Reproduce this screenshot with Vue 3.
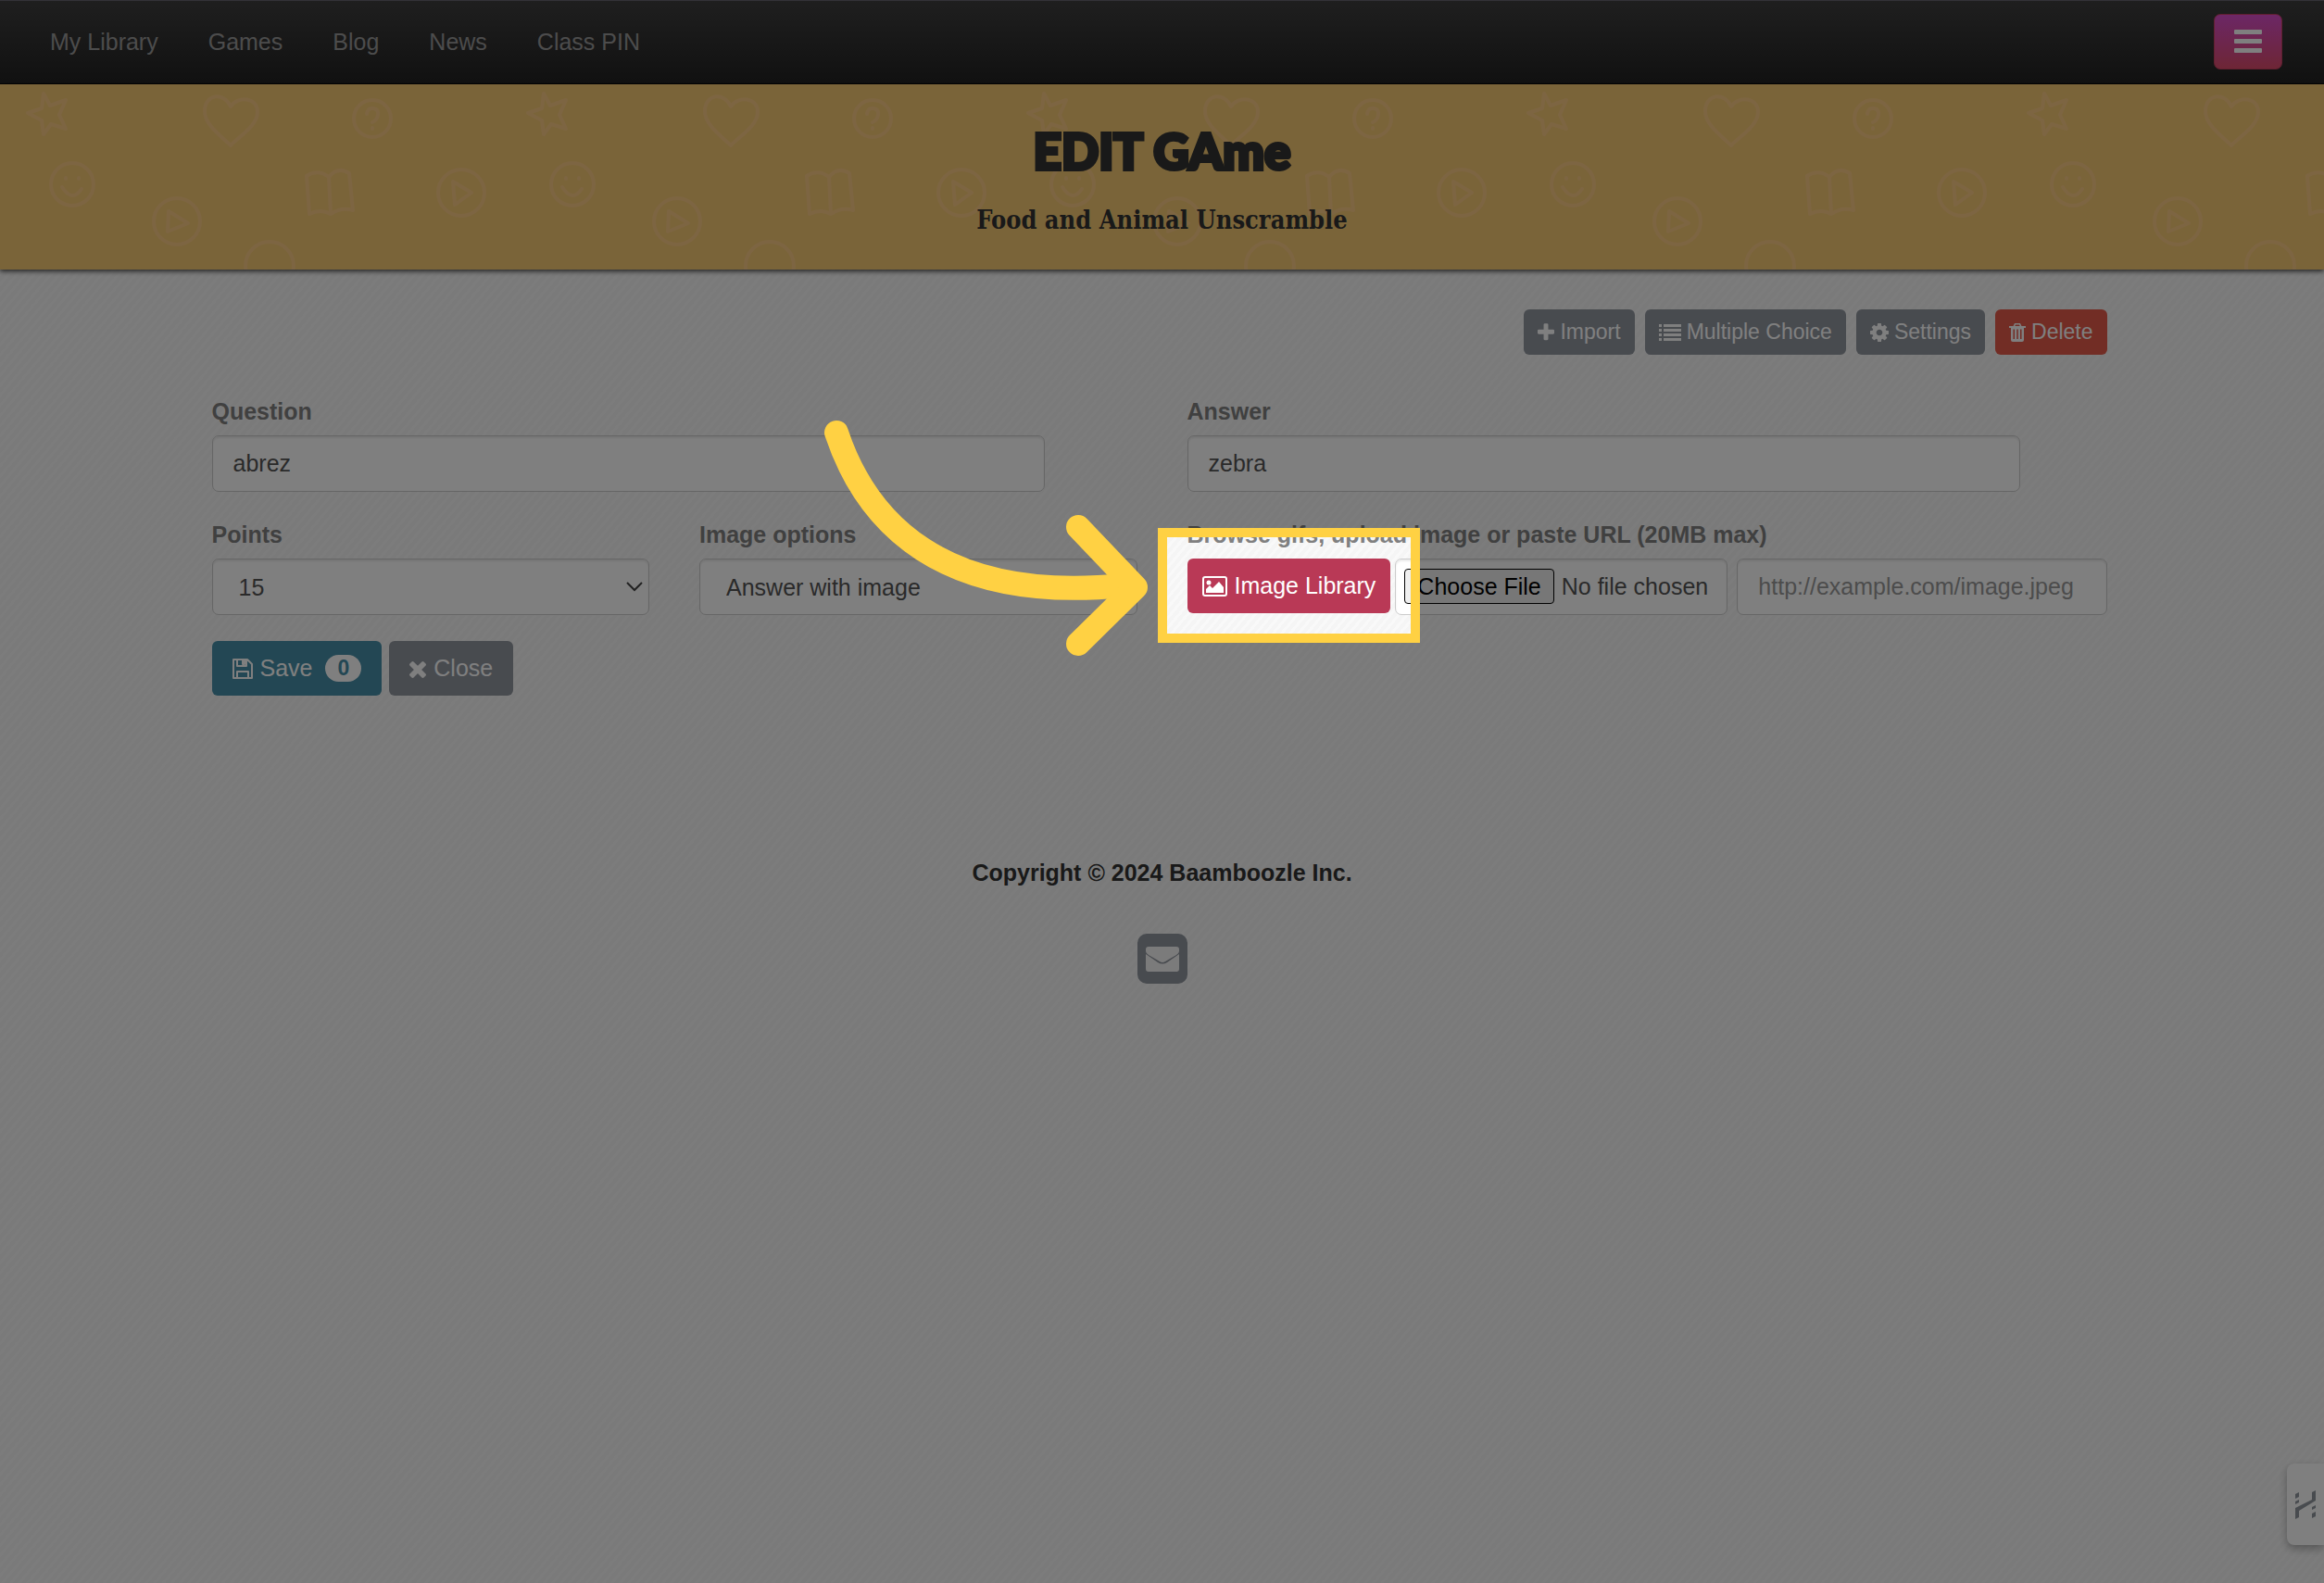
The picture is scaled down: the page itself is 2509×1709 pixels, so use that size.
<script setup>
import { ref, reactive } from 'vue'

const links = ['My Library', 'Games', 'Blog', 'News', 'Class PIN']

const form = reactive({
  question: 'abrez',
  answer: 'zebra',
  points: '15',
  imageOption: 'Answer with image',
  imageUrl: ''
})
const savedCount = ref(0)

const pointOptions = ['5', '10', '15', '20', '25']
const imageOptions = ['No image', 'Question with image', 'Answer with image']

function save() {
  savedCount.value++
}
</script>

<template>
  <div class="page">
    <header class="navbar">
      <nav class="nav-links">
        <a v-for="link in links" :key="link" href="#">{{ link }}</a>
      </nav>
      <button class="menu-btn" type="button" aria-label="Menu">
        <svg viewBox="0 0 30 25" width="30" height="25" fill="#fff">
          <rect y="0" width="30" height="5" rx="1" />
          <rect y="10" width="30" height="5" rx="1" />
          <rect y="20" width="30" height="5" rx="1" />
        </svg>
      </button>
    </header>

    <section class="banner">
      <!-- doodle pattern -->
      <svg class="doodles" width="100%" height="100%" aria-hidden="true">
        <defs>
          <pattern id="doodle" width="540" height="400" patternUnits="userSpaceOnUse">
            <g fill="none" stroke="#fbcb84" stroke-width="4" stroke-linecap="round" stroke-linejoin="round">
              <path d="M47 10L54 23L71 17L64 33L71 48L55 43L47 54L45 39L30 31L45 26Z" />
              <path d="M249 66C236 54 221 43 221 29C221 10 242 8 249 24C257 12 278 14 278 30C278 44 260 55 249 66Z" />
              <circle cx="402" cy="37" r="20" />
              <path d="M396 32q1-7 7-6t5 7-6 8m0 6v1" />
              <circle cx="78" cy="108" r="23" />
              <path d="M71 101v1M85 101v1M67 111q11 17 21 2" />
              <circle cx="191" cy="148" r="25" />
              <path d="M182 137L203 150L181 159Z" />
              <path d="M355 100q-12-9-24-1l3 41q12-6 23 0 12-8 24-4l-4-40q-12-8-22 4zl2 40" />
              <circle cx="498" cy="117" r="25" />
              <path d="M489 105L509 117L491 130Z" />
              <circle cx="291" cy="196" r="26" />
            </g>
          </pattern>
        </defs>
        <rect width="100%" height="100%" fill="url(#doodle)" />
      </svg>
      <h1>EDIT GAme</h1>
      <h2>Food and Animal Unscramble</h2>
    </section>

    <main class="container">
      <div class="toolbar">
        <button class="btn btn-sm" type="button">
          <svg class="icon" viewBox="192 128 1408 1536" width="18" height="20"><path d="M1600 736v192q0 40-28 68t-68 28h-416v416q0 40-28 68t-68 28h-192q-40 0-68-28t-28-68v-416h-416q-40 0-68-28t-28-68v-192q0-40 28-68t68-28h416v-416q0-40 28-68t68-28h192q40 0 68 28t28 68v416h416q40 0 68 28t28 68z" /></svg>
          Import
        </button>
        <button class="btn btn-sm" type="button">
          <svg class="icon" viewBox="0 0 24 18" width="24" height="18">
            <path d="M0 0h3v3H0zM5 0h19v3H5zM0 5h3v3H0zM5 5h19v3H5zM0 10h3v3H0zM5 10h19v3H5zM0 15h3v3H0zM5 15h19v3H5z" />
          </svg>
          Multiple Choice
        </button>
        <button class="btn btn-sm" type="button">
          <svg class="icon" viewBox="128 128 1536 1536" width="20" height="20"><path d="M1152 896q0-106-75-181t-181-75-181 75-75 181 75 181 181 75 181-75 75-181zm512-109v222q0 12-8 23t-20 13l-185 28q-19 54-39 91 35 50 107 138 10 12 10 25t-9 23q-27 37-99 108t-94 71q-12 0-26-9l-138-108q-44 23-91 38-16 136-29 186-7 28-36 28h-222q-14 0-24.5-8.5t-11.5-21.5l-28-184q-49-16-90-37l-141 107q-10 9-25 9-14 0-25-11-126-114-165-168-7-10-7-23 0-12 8-23 15-21 51-66.5t54-70.5q-27-50-41-99l-183-27q-13-2-21-12.5t-8-23.5v-222q0-12 8-23t19-13l186-28q14-46 39-92-40-57-107-138-10-12-10-24 0-10 9-23 26-36 98.5-107.5t94.5-71.5q13 0 26 10l138 107q44-23 91-38 16-136 29-186 7-28 36-28h222q14 0 24.5 8.5t11.5 21.5l28 184q49 16 90 37l142-107q9-9 24-9 13 0 25 10 129 119 165 170 7 8 7 22 0 12-8 23-15 21-51 66.5t-54 70.5q26 50 41 98l183 28q13 2 21 12.5t8 23.5z" /></svg>
          Settings
        </button>
        <button class="btn btn-sm btn-danger" type="button">
          <svg class="icon" viewBox="0 0 18 20" width="18" height="20">
            <path fill-rule="evenodd" d="M6 0h6l1.500 3H18v2h-2v13q0 2-2 2H4q-2 0-2-2V5H0V3h4.500zM7 1.500L6.300 3h5.400L11 1.500zM4.500 6.500v10.500h1.500V6.500zM8.300 6.500v10.500h1.500V6.500zM12 6.500v10.500h1.500V6.500z" />
          </svg>
          Delete
        </button>
      </div>

      <form class="game-form" @submit.prevent="save">
        <div class="field half">
          <label for="question">Question</label>
          <input id="question" v-model="form.question" class="control" type="text">
        </div>
        <div class="field half">
          <label for="answer">Answer</label>
          <input id="answer" v-model="form.answer" class="control" type="text">
        </div>

        <div class="field">
          <label for="points">Points</label>
          <div class="select-wrap">
            <select id="points" v-model="form.points" class="control">
              <option v-for="p in pointOptions" :key="p">{{ p }}</option>
            </select>
            <svg class="chevron" viewBox="0 0 18 11" width="18" height="11"><path d="M1 1l8 8 8-8" /></svg>
          </div>
        </div>
        <div class="field">
          <label for="image-option">Image options</label>
          <div class="select-wrap">
            <select id="image-option" v-model="form.imageOption" class="control">
              <option v-for="o in imageOptions" :key="o">{{ o }}</option>
            </select>
            <svg class="chevron" viewBox="0 0 18 11" width="18" height="11"><path d="M1 1l8 8 8-8" /></svg>
          </div>
        </div>
        <div class="field wide">
          <label for="image-url">Browse gifs, upload image or paste URL (20MB max)</label>
          <div class="image-row">
            <div class="library">
              <button class="btn btn-library" type="button">
                <svg class="icon" viewBox="0 0 27 22" width="27" height="22">
                  <rect x="1" y="1" width="25" height="20" rx="2" fill="none" stroke="currentColor" stroke-width="2" />
                  <circle cx="7" cy="7" r="2.500" />
                  <path d="M4 18v-4l4-4 3 3 7-7 5 6v6z" />
                </svg>
                Image Library
              </button>
              <!-- tutorial spotlight, dims everything outside the frame -->
              <div class="spotlight"></div>
              <svg class="arrow" viewBox="0 0 352 168" width="352" height="168" aria-hidden="true">
                <path d="M16 19C48 115 129 204 326 184" />
                <path d="M277 121L339 186L277 247" />
              </svg>
            </div>
            <input class="control file" type="file" aria-label="Upload image">
            <input id="image-url" v-model="form.imageUrl" class="control url" type="url" placeholder="http://example.com/image.jpeg">
          </div>
        </div>

        <div class="actions">
          <button class="btn btn-save" type="submit">
            <svg class="icon" viewBox="0 0 22 22" width="22" height="22" fill="none" stroke="currentColor" stroke-width="2" stroke-linejoin="round">
              <path d="M1 1h15l5 5v15H1zM5 1v7h10V1M5 21v-7h12v7" />
              <path d="M11 2h2v4h-2z" />
            </svg>
            Save
            <span class="badge">{{ savedCount }}</span>
          </button>
          <button class="btn btn-close" type="button">
            <svg class="icon" viewBox="302 238 1188 1316" width="18" height="20"><path d="M1490 1322q0 40-28 68l-136 136q-28 28-68 28t-68-28l-294-294-294 294q-28 28-68 28t-68-28l-136-136q-28-28-28-68t28-68l294-294-294-294q-28-28-28-68t28-68l136-136q28-28 68-28t68 28l294 294 294-294q28-28 68-28t68 28l136 136q28 28 28 68t-28 68l-294 294 294 294q28 28 28 68z" /></svg>
            Close
          </button>
        </div>
      </form>
    </main>

    <footer class="footer">
      <p>Copyright © 2024 Baamboozle Inc.</p>
      <a href="#" class="mail" aria-label="Email us">
        <svg viewBox="0 0 54 54" width="54" height="54">
          <rect width="54" height="54" rx="10" fill="#91969f" />
          <path d="M12 14h30q3 0 3 3v2q0 2-3 4L30 30q-3 2-6 0L12 23q-3-2-3-4v-2q0-3 3-3z" fill="#f7f7f7" />
          <path d="M9 22l13 9q5 3 10 0l13-9v16q0 3-3 3H12q-3 0-3-3z" fill="#f7f7f7" />
        </svg>
      </a>
    </footer>

    <button class="side-tab" type="button" aria-label="Help">
      <svg viewBox="0 0 22 31" width="22" height="31" fill="#91969f">
        <path d="M18 2l4-2v11L4 22v7l-4 2V19L18 10z" />
        <path d="M0 4l4-2v5l-4 2zM0 12l4-2v3l-4 2zM18 18l4-2v3l-4 2zM18 25l4-2v5l-4 2z" />
      </svg>
    </button>
  </div>
</template>

<style>
body {
  background: #7c7c7c;
}
</style>

<style scoped>
.page {
  position: relative;
  min-height: 100vh;
  overflow: hidden;
  background: repeating-linear-gradient(130deg, #f9f9f9 0 3px, #f5f5f5 3px 7px);
  font-family: "Liberation Sans", Arial, sans-serif;
  font-size: 25px;
  line-height: 36px;
  color: #333;
}

.page * {
  box-sizing: border-box;
}

.navbar {
  display: flex;
  align-items: center;
  justify-content: space-between;
  height: 91px;
  padding: 0 45px 2px 54px;
  background: linear-gradient(#3e3e3e, #222);
  border-top: 1px solid #666570;
  border-bottom: 1px solid #080808;
}

.nav-links {
  display: flex;
  gap: 54px;
}

.nav-links a {
  color: #999;
  text-decoration: none;
}

.menu-btn {
  display: flex;
  align-items: center;
  justify-content: center;
  width: 74px;
  height: 60px;
  border: 1px solid #c0405f;
  border-radius: 7px;
  background: linear-gradient(#d84ecb, #dc4c6c);
  cursor: pointer;
}

.banner {
  position: relative;
  display: flex;
  flex-direction: column;
  align-items: center;
  height: 200px;
  padding-top: 40px;
  background: #f4c872;
  box-shadow: 0 2px 5px rgba(0, 0, 0, 0.7);
}

.doodles {
  position: absolute;
  inset: 0;
}

.banner h1,
.banner h2 {
  position: relative;
  margin: 0;
}

.banner h1 {
  font-family: "Lato Black", Lato, sans-serif;
  font-size: 53px;
  font-weight: 900;
  line-height: 64px;
  -webkit-text-stroke: 4px #333;
}

.banner h2 {
  margin-top: 25px;
  font-family: "DejaVu Serif Condensed", "DejaVu Serif", serif;
  font-size: 27px;
  font-weight: 700;
  line-height: 36px;
}

.container {
  max-width: 2052px;
  margin: 0 auto;
  padding-top: 43px;
}

.toolbar {
  display: flex;
  justify-content: flex-end;
  gap: 11px;
  padding-right: 6px;
}

.btn {
  display: inline-flex;
  align-items: center;
  gap: 8px;
  height: 59px;
  padding: 0 22px;
  border: 0;
  border-radius: 6px;
  background: #91969f;
  color: #fff;
  font-family: inherit;
  font-size: 25px;
  white-space: nowrap;
  cursor: pointer;
}

.btn-sm {
  height: 49px;
  gap: 6px;
  padding: 0 15px;
  font-size: 23px;
}

.btn-danger {
  background: #e45a4a;
}

.btn-save {
  background: #468fa8;
}

.btn-library {
  padding: 0 16px;
  background: #b93956;
}

.icon {
  flex: none;
  fill: currentColor;
}

.btn-save .icon {
  fill: none;
}

.badge {
  margin-left: 6px;
  padding: 0 13px;
  border-radius: 15px;
  background: #fff;
  color: #468fa8;
  font-size: 23px;
  font-weight: 700;
  line-height: 29px;
}

.game-form {
  display: grid;
  grid-template-columns: repeat(4, minmax(0, 1fr));
  column-gap: 54px;
  row-gap: 28px;
  padding-top: 43px;
}

.half,
.wide {
  grid-column: span 2;
}

.half .control {
  width: 90%;
}

.field label {
  display: block;
  margin-bottom: 8px;
  color: #808080;
  font-weight: 700;
}

.control {
  display: block;
  width: 100%;
  height: 61px;
  padding: 0 22px;
  border: 1px solid #ccc;
  border-radius: 7px;
  background: #fff;
  box-shadow: inset 0 2px 2px rgba(0, 0, 0, 0.08);
  color: #555;
  font-family: inherit;
  font-size: 25px;
}

.control::placeholder {
  color: #999;
  opacity: 1;
}

.select-wrap {
  position: relative;
}

select.control {
  padding: 0 28px;
  appearance: none;
}

.chevron {
  position: absolute;
  top: 25px;
  right: 7px;
  fill: none;
  stroke: #444;
  stroke-width: 2;
  pointer-events: none;
}

.image-row {
  display: flex;
  padding-right: 6px;
}

.library {
  position: relative;
  flex: none;
  height: 59px;
}

.spotlight {
  position: absolute;
  inset: -33px -32px -32px;
  z-index: 10;
  border: 10px solid #ffd143;
  box-shadow: 0 0 0 4000px rgba(0, 0, 0, 0.5);
  pointer-events: none;
}

.arrow {
  position: absolute;
  top: -155px;
  right: 100%;
  z-index: 11;
  margin-right: 43px;
  overflow: visible;
  fill: none;
  stroke: #ffd143;
  stroke-width: 26;
  stroke-linecap: round;
  stroke-linejoin: round;
  pointer-events: none;
}

.file {
  flex: none;
  width: 359px;
  margin: 0 10px 0 5px;
  padding: 10px 9px;
}

.file::file-selector-button {
  height: 38px;
  margin-right: 8px;
  padding: 0 13px;
  border: 1px solid #000;
  border-radius: 4px;
  background: #efefef;
  color: #000;
  font-family: inherit;
  font-size: 25px;
}

.url {
  flex: 1;
  min-width: 0;
}

.actions {
  display: flex;
  grid-column: 1 / -1;
  gap: 8px;
}

.footer {
  display: flex;
  flex-direction: column;
  align-items: center;
  padding-top: 173px;
}

.footer p {
  margin: 0 0 48px;
  font-weight: 700;
}

.mail {
  display: block;
  height: 54px;
}

.side-tab {
  position: absolute;
  right: 0;
  bottom: 41px;
  display: flex;
  align-items: center;
  width: 40px;
  height: 88px;
  padding: 0 9px;
  border: 0;
  border-radius: 8px 0 0 8px;
  background: #fff;
  box-shadow: 0 4px 10px rgba(0, 0, 0, 0.3);
  cursor: pointer;
}
</style>
